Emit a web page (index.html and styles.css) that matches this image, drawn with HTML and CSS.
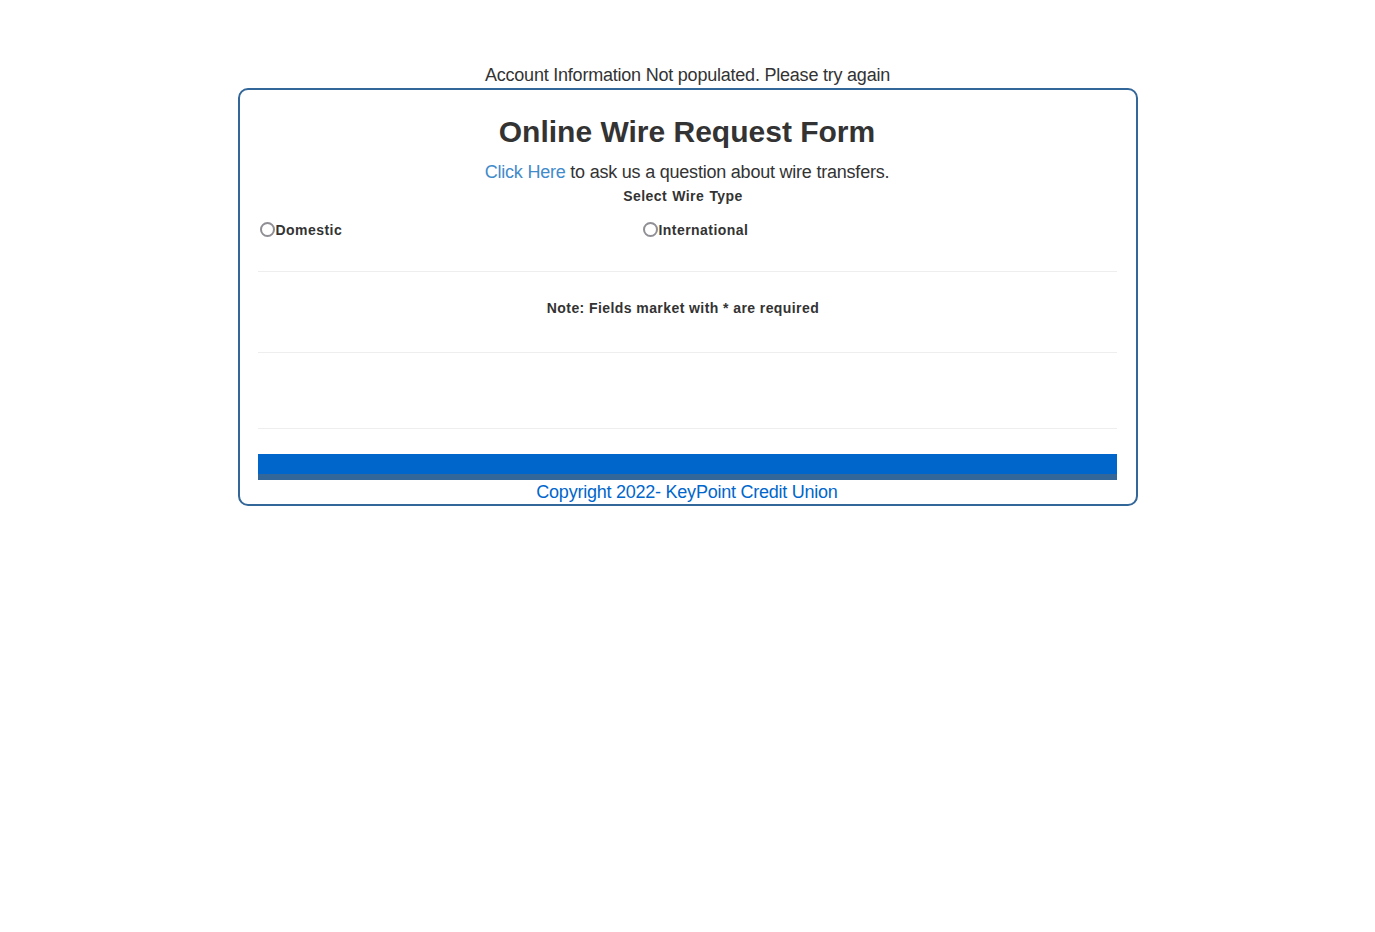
FILE: index.html
```html
<!DOCTYPE html>
<html>
<head>
<meta charset="utf-8">
<title>Online Wire Request Form</title>
<link rel="stylesheet" href="styles.css">
</head>
<body>
<div class="page">
  <div class="notice">Account Information Not populated. Please try again</div>
  <div class="box">
    <h1 class="title">Online Wire Request Form</h1>
    <div class="sub"><a href="#" class="link">Click Here</a> to ask us a question about wire transfers.</div>
    <div class="type-label">Select Wire Type</div>
    <div class="radios">
      <label class="opt"><input type="radio" name="wt" class="radio"><span>Domestic</span></label>
      <label class="opt"><input type="radio" name="wt" class="radio"><span>International</span></label>
    </div>
    <hr class="rule rule-1">
    <div class="note">Note: Fields market with * are required</div>
    <hr class="rule rule-2">
    <hr class="rule rule-3">
    <div class="bar"></div>
    <div class="copy">Copyright 2022- KeyPoint Credit Union</div>
  </div>
</div>
</body>
</html>
```

FILE: styles.css
```css
html, body {
  margin: 0;
  padding: 0;
  background: #fff;
}
body {
  font-family: "Liberation Sans", Arial, sans-serif;
  color: #333;
}
.page {
  width: 900px;
  margin: 0 auto;
  padding-top: 65px;
}
.notice {
  font-size: 18px;
  line-height: 20px;
  letter-spacing: -0.22px;
  text-align: center;
  margin-bottom: 3px;
}
.box {
  border: 2px solid #336699;
  border-radius: 10px;
  padding: 0 19px 2px 18px;
}
.title {
  margin: 25px 0 0;
  font-size: 30px;
  line-height: 33px;
  font-weight: bold;
  text-align: center;
}
.sub {
  margin-top: 14px;
  font-size: 18px;
  line-height: 20px;
  letter-spacing: -0.22px;
  text-align: center;
}
.link {
  color: #428bca;
  text-decoration: none;
}
.type-label {
  margin-top: 4px;
  font-size: 14px;
  font-weight: bold;
  line-height: 20px;
  letter-spacing: 0.4px;
  word-spacing: 1px;
  text-align: center;
  padding-right: 8px;
}
.radios {
  margin-top: 14px;
  display: grid;
  grid-template-columns: 383px 1fr;
  height: 20px;
}
.opt {
  display: flex;
  align-items: center;
  font-size: 14px;
  font-weight: bold;
  line-height: 20px;
  letter-spacing: 0.45px;
}
.radio {
  appearance: none;
  -webkit-appearance: none;
  width: 15px;
  height: 15px;
  margin: 0 1px 0 2px;
  border: 2px solid #8f8f95;
  border-radius: 50%;
  background: #fff;
  box-sizing: border-box;
  position: relative;
  top: -1px;
}
.rule {
  border: 0;
  border-top: 1px solid #eee;
  margin: 0;
  height: 0;
}
.rule-1 { margin-top: 31px; }
.note {
  margin-top: 26px;
  font-size: 14px;
  font-weight: bold;
  line-height: 20px;
  letter-spacing: 0.42px;
  text-align: center;
  padding-right: 8px;
}
.rule-2 { margin-top: 34px; }
.rule-3 { margin-top: 75px; }
.bar {
  margin-top: 25px;
  height: 20px;
  background: #0066cc;
  border-bottom: 6px solid #336699;
}
.copy {
  margin-top: 2px;
  font-size: 18px;
  line-height: 20px;
  letter-spacing: -0.24px;
  color: #0066cc;
  text-align: center;
}
```
